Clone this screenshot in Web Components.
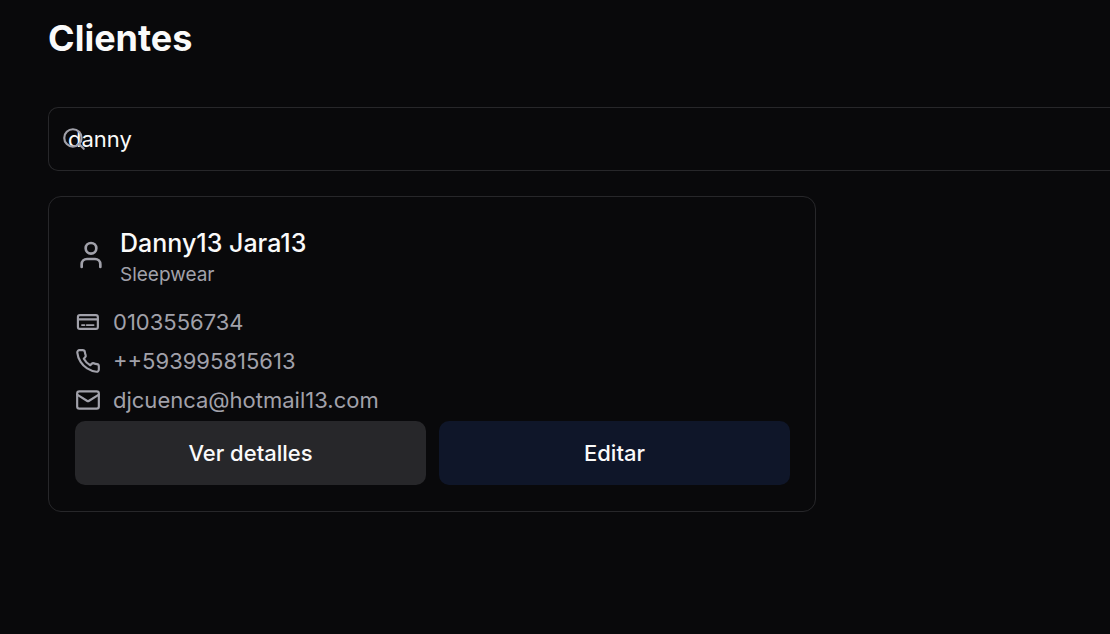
<!DOCTYPE html>
<html lang="es">
<head>
<meta charset="utf-8">
<title>Clientes</title>
<style>
  body { margin: 0; background: #09090b; color: #fafafa; font-family: Inter, "Liberation Sans", sans-serif; overflow-x: hidden; }
</style>
</head>
<body>
<clients-page>
  <search-box value="danny"></search-box>
  <client-card>
    <span slot="name">Danny13 Jara13</span>
    <span slot="business">Sleepwear</span>
    <contact-line icon="card">0103556734</contact-line>
    <contact-line icon="phone">++593995815613</contact-line>
    <contact-line icon="mail">djcuenca@hotmail13.com</contact-line>
    <action-button slot="actions" tone="secondary">Ver detalles</action-button>
    <action-button slot="actions" tone="primary">Editar</action-button>
  </client-card>
</clients-page>
<script>
const define = (name, html, setup) => customElements.define(name, class extends HTMLElement {
  constructor() {
    super();
    this.attachShadow({ mode: "open" }).innerHTML = html;
  }
  connectedCallback() { if (setup) setup(this, this.shadowRoot); }
});

const icons = {
  search: '<circle cx="11" cy="11" r="8"/><path d="m21 21-4.3-4.3"/>',
  user: '<path d="M19 21v-2a4 4 0 0 0-4-4H9a4 4 0 0 0-4 4v2"/><circle cx="12" cy="7" r="4"/>',
  card: '<rect x="2.7" y="5.6" width="18.4" height="12.8" rx="1.8"/><path d="M3 9.6h18"/><path stroke-width="1.6" d="M6.4 14.8h2.4M10.8 14.8h6.4"/>',
  phone: '<path d="M22 16.92v3a2 2 0 0 1-2.18 2 19.79 19.79 0 0 1-8.63-3.07 19.5 19.5 0 0 1-6-6 19.79 19.79 0 0 1-3.07-8.67A2 2 0 0 1 4.11 2h3a2 2 0 0 1 2 1.72 12.84 12.84 0 0 0 .7 2.81 2 2 0 0 1-.45 2.11L8.09 9.91a16 16 0 0 0 6 6l1.27-1.27a2 2 0 0 1 2.11-.45 12.84 12.84 0 0 0 2.81.7A2 2 0 0 1 22 16.92z"/>',
  mail: '<rect x="2" y="4" width="20" height="16" rx="2"/><path d="m22 7-8.97 5.7a1.94 1.94 0 0 1-2.06 0L2 7"/>'
};

define("line-icon", `
  <style>
    :host { display: block; flex: none; width: 26px; height: 26px; color: #a1a1aa; }
    svg { display: block; width: 100%; height: 100%; fill: none; stroke: currentColor; stroke-width: 2; stroke-linecap: round; stroke-linejoin: round; }
  </style>
  <svg viewBox="0 0 24 24" aria-hidden="true"></svg>`,
  (el, root) => { root.querySelector("svg").innerHTML = icons[el.getAttribute("name")] || ""; });

define("search-box", `
  <style>
    :host { display: block; position: relative; }
    input { display: block; box-sizing: border-box; width: 100%; height: 64px; margin: 0; padding: 0 19px; border: 1px solid #27272a; border-right: 0; border-radius: 10px 0 0 10px; background: transparent; color: #fafafa; font: 22px/32px Inter, "Liberation Sans", sans-serif; outline: none; }
    line-icon { position: absolute; left: 13px; top: 19px; width: 26px; height: 26px; pointer-events: none; }
  </style>
  <input type="text" aria-label="Buscar cliente">
  <line-icon name="search"></line-icon>`,
  (el, root) => { root.querySelector("input").value = el.getAttribute("value"); });

define("contact-line", `
  <style>
    :host { display: flex; align-items: center; gap: 12px; font-size: 22px; line-height: 32px; color: #a1a1aa; }
  </style>
  <line-icon></line-icon><span><slot></slot></span>`,
  (el, root) => {
    const icon = document.createElement("line-icon");
    icon.setAttribute("name", el.getAttribute("icon"));
    root.querySelector("line-icon").replaceWith(icon);
  });

define("action-button", `
  <style>
    :host { display: block; flex: 1; }
    button { display: block; width: 100%; height: 64px; padding: 0 16px; border: 0; border-radius: 10px; background: #27272a; color: #fafafa; font: 500 22px/32px Inter, "Liberation Sans", sans-serif; cursor: pointer; }
    :host([tone="primary"]) button { background: #0f1629; }
  </style>
  <button type="button"><slot></slot></button>`);

define("client-card", `
  <style>
    :host { display: block; box-sizing: border-box; max-width: 768px; padding: 26px 25px 26px 26px; border: 1px solid #27272a; border-radius: 13px; }
    header { display: flex; align-items: center; gap: 13px; margin-bottom: 19px; }
    header line-icon { width: 32px; height: 32px; }
    h2 { margin: 0; font-size: 25px; line-height: 40px; font-weight: 500; }
    p { margin: 0; font-size: 19px; line-height: 24px; color: #a1a1aa; }
    .lines { display: flex; flex-direction: column; gap: 7px; }
    footer { display: flex; gap: 13px; margin-top: 5px; }
  </style>
  <header>
    <line-icon name="user"></line-icon>
    <div><h2><slot name="name"></slot></h2><p><slot name="business"></slot></p></div>
  </header>
  <div class="lines"><slot></slot></div>
  <footer><slot name="actions"></slot></footer>`);

define("clients-page", `
  <style>
    :host { display: block; padding: 12px 0 48px 48px; }
    h1 { margin: 0 0 43px; font-size: 36px; line-height: 52px; font-weight: 700; }
    main { display: flex; flex-direction: column; gap: 25px; }
  </style>
  <h1>Clientes</h1>
  <main><slot></slot></main>`);
</script>
</body>
</html>
